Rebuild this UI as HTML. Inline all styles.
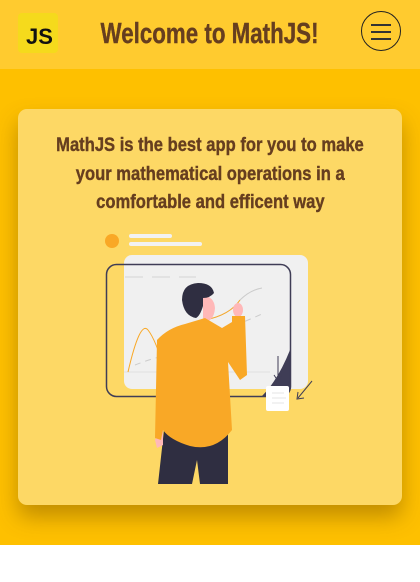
<!DOCTYPE html>
<html><head><meta charset="utf-8"><style>
*{margin:0;padding:0;box-sizing:border-box}
body{width:420px;height:582px;background:#fff;font-family:"Liberation Sans",sans-serif;overflow:hidden;position:relative}
.hdr{position:absolute;left:0;top:0;width:420px;height:69px;background:#FFCB2F}
.main{position:absolute;left:0;top:69px;width:420px;height:476px;background:#FEC000}
.logo{position:absolute;left:18px;top:13px;width:40px;height:40px;background:#F5DA1C;border-radius:4px;font-weight:bold;font-size:22px;color:#111;padding:13px 0 0 8px;line-height:1}
.title{position:absolute;left:0;width:420px;top:16px;text-align:center;font-weight:bold;font-size:29px;color:#663E1F;line-height:36px;-webkit-text-stroke:.4px #663E1F}
.title span{display:inline-block;transform:scaleX(.77)}
.txt span{display:inline-block;transform:scaleX(.85)}
.menu{position:absolute;left:361px;top:11px;width:40px;height:40px;border:1.5px solid #222;border-radius:50%}
.menu i{position:absolute;left:9px;width:20px;height:1.5px;background:#333}
.card{position:absolute;left:18px;top:109px;width:384px;height:396px;background:#FDD865;border-radius:9px;box-shadow:0 12px 22px rgba(120,80,0,.45)}
.txt{position:absolute;left:0;top:22px;width:384px;text-align:center;font-weight:bold;font-size:19.5px;line-height:28.5px;color:#663E1F;white-space:nowrap;-webkit-text-stroke:.4px #663E1F}
</style></head><body>
<div class="hdr"><div class="logo">JS</div><div class="title"><span>Welcome to MathJS!</span></div>
<div class="menu"><i style="top:12px"></i><i style="top:19px"></i><i style="top:26px"></i></div></div>
<div class="main"></div>
<div class="card"><div class="txt"><span>MathJS is the best app for you to make</span><br><span>your mathematical operations in a</span><br><span>comfortable and efficent way</span></div></div>
<svg style="position:absolute;left:0;top:0" width="420" height="582" viewBox="0 0 420 582">
<circle cx="112" cy="241" r="7" fill="#F9A826"/>
<rect x="129" y="234" width="43" height="4" rx="2" fill="#f2f2f2"/>
<rect x="129" y="242" width="73" height="4" rx="2" fill="#f2f2f2"/>
<rect x="124" y="255" width="184" height="134" rx="8" fill="#F0F0F0"/>
<path d="M290 350 L290 386 Q290 396 280 396 L262 396 Q278 380 290 350Z" fill="#3F3D56"/>
<rect x="106.5" y="264.5" width="184" height="132" rx="10" fill="none" stroke="#3F3D56" stroke-width="1.5"/>
<g stroke="#e2e2e2" stroke-width="2"><line x1="125" y1="277" x2="143" y2="277"/><line x1="152" y1="277" x2="170" y2="277"/><line x1="179" y1="277" x2="196" y2="277"/></g>
<line x1="124" y1="372" x2="270" y2="372" stroke="#e0e0e0"/>
<path d="M128 372 Q140 320 148 330 Q156 340 165 372" fill="none" stroke="#F9A826" stroke-width="1"/>
<path d="M135 365 Q160 355 200 348 M225 330 L262 314" fill="none" stroke="#ccc" stroke-dasharray="6 5"/>
<path d="M205 320 Q230 315 240 300 Q250 290 262 288" fill="none" stroke="#ccc"/>
<path d="M205 320 Q230 315 240 300" fill="none" stroke="#F9A826"/>
<line x1="278" y1="356" x2="278" y2="380" stroke="#3F3D56"/><path d="M274 375 L278 381 L282 375" fill="none" stroke="#3F3D56"/>
<line x1="312" y1="381" x2="298" y2="398" stroke="#3F3D56"/><path d="M298 392 L297 399 L304 398" fill="none" stroke="#3F3D56"/>
<rect x="266" y="386" width="23" height="25" rx="2" fill="#fff"/>
<g stroke="#e4e4e4"><line x1="272" y1="393" x2="284" y2="393"/><line x1="272" y1="398" x2="286" y2="398"/><line x1="272" y1="403" x2="284" y2="403"/></g>
<path d="M164 430 L158 484 L192 484 L197 460 L200 484 L228 484 L228 425Z" fill="#2F2E41"/>
<path d="M155 440 L157 448 L163 445 L163 425Z" fill="#FFB8B8"/>
<path d="M203 296 Q214 296 215 308 Q214 322 203 322 Z" fill="#FFB8B8"/>
<path d="M182 300 Q182 284 198 283 Q212 283 214 293 Q210 298 203 298 L203 306 Q200 316 196 318 Q184 316 182 300Z" fill="#2F2E41"/>
<ellipse cx="238" cy="310" rx="5" ry="7" fill="#FFB8B8"/>
<path d="M185 324 L205 318 L222 328 L232 322 L232 316 L245 316 L247 375 L240 380 L228 362 L232 430 Q215 452 190 446 Q170 440 163 430 L161 440 L155 438 L157 340 Q168 328 185 324Z" fill="#F9A826"/>
</svg>
</body></html>
